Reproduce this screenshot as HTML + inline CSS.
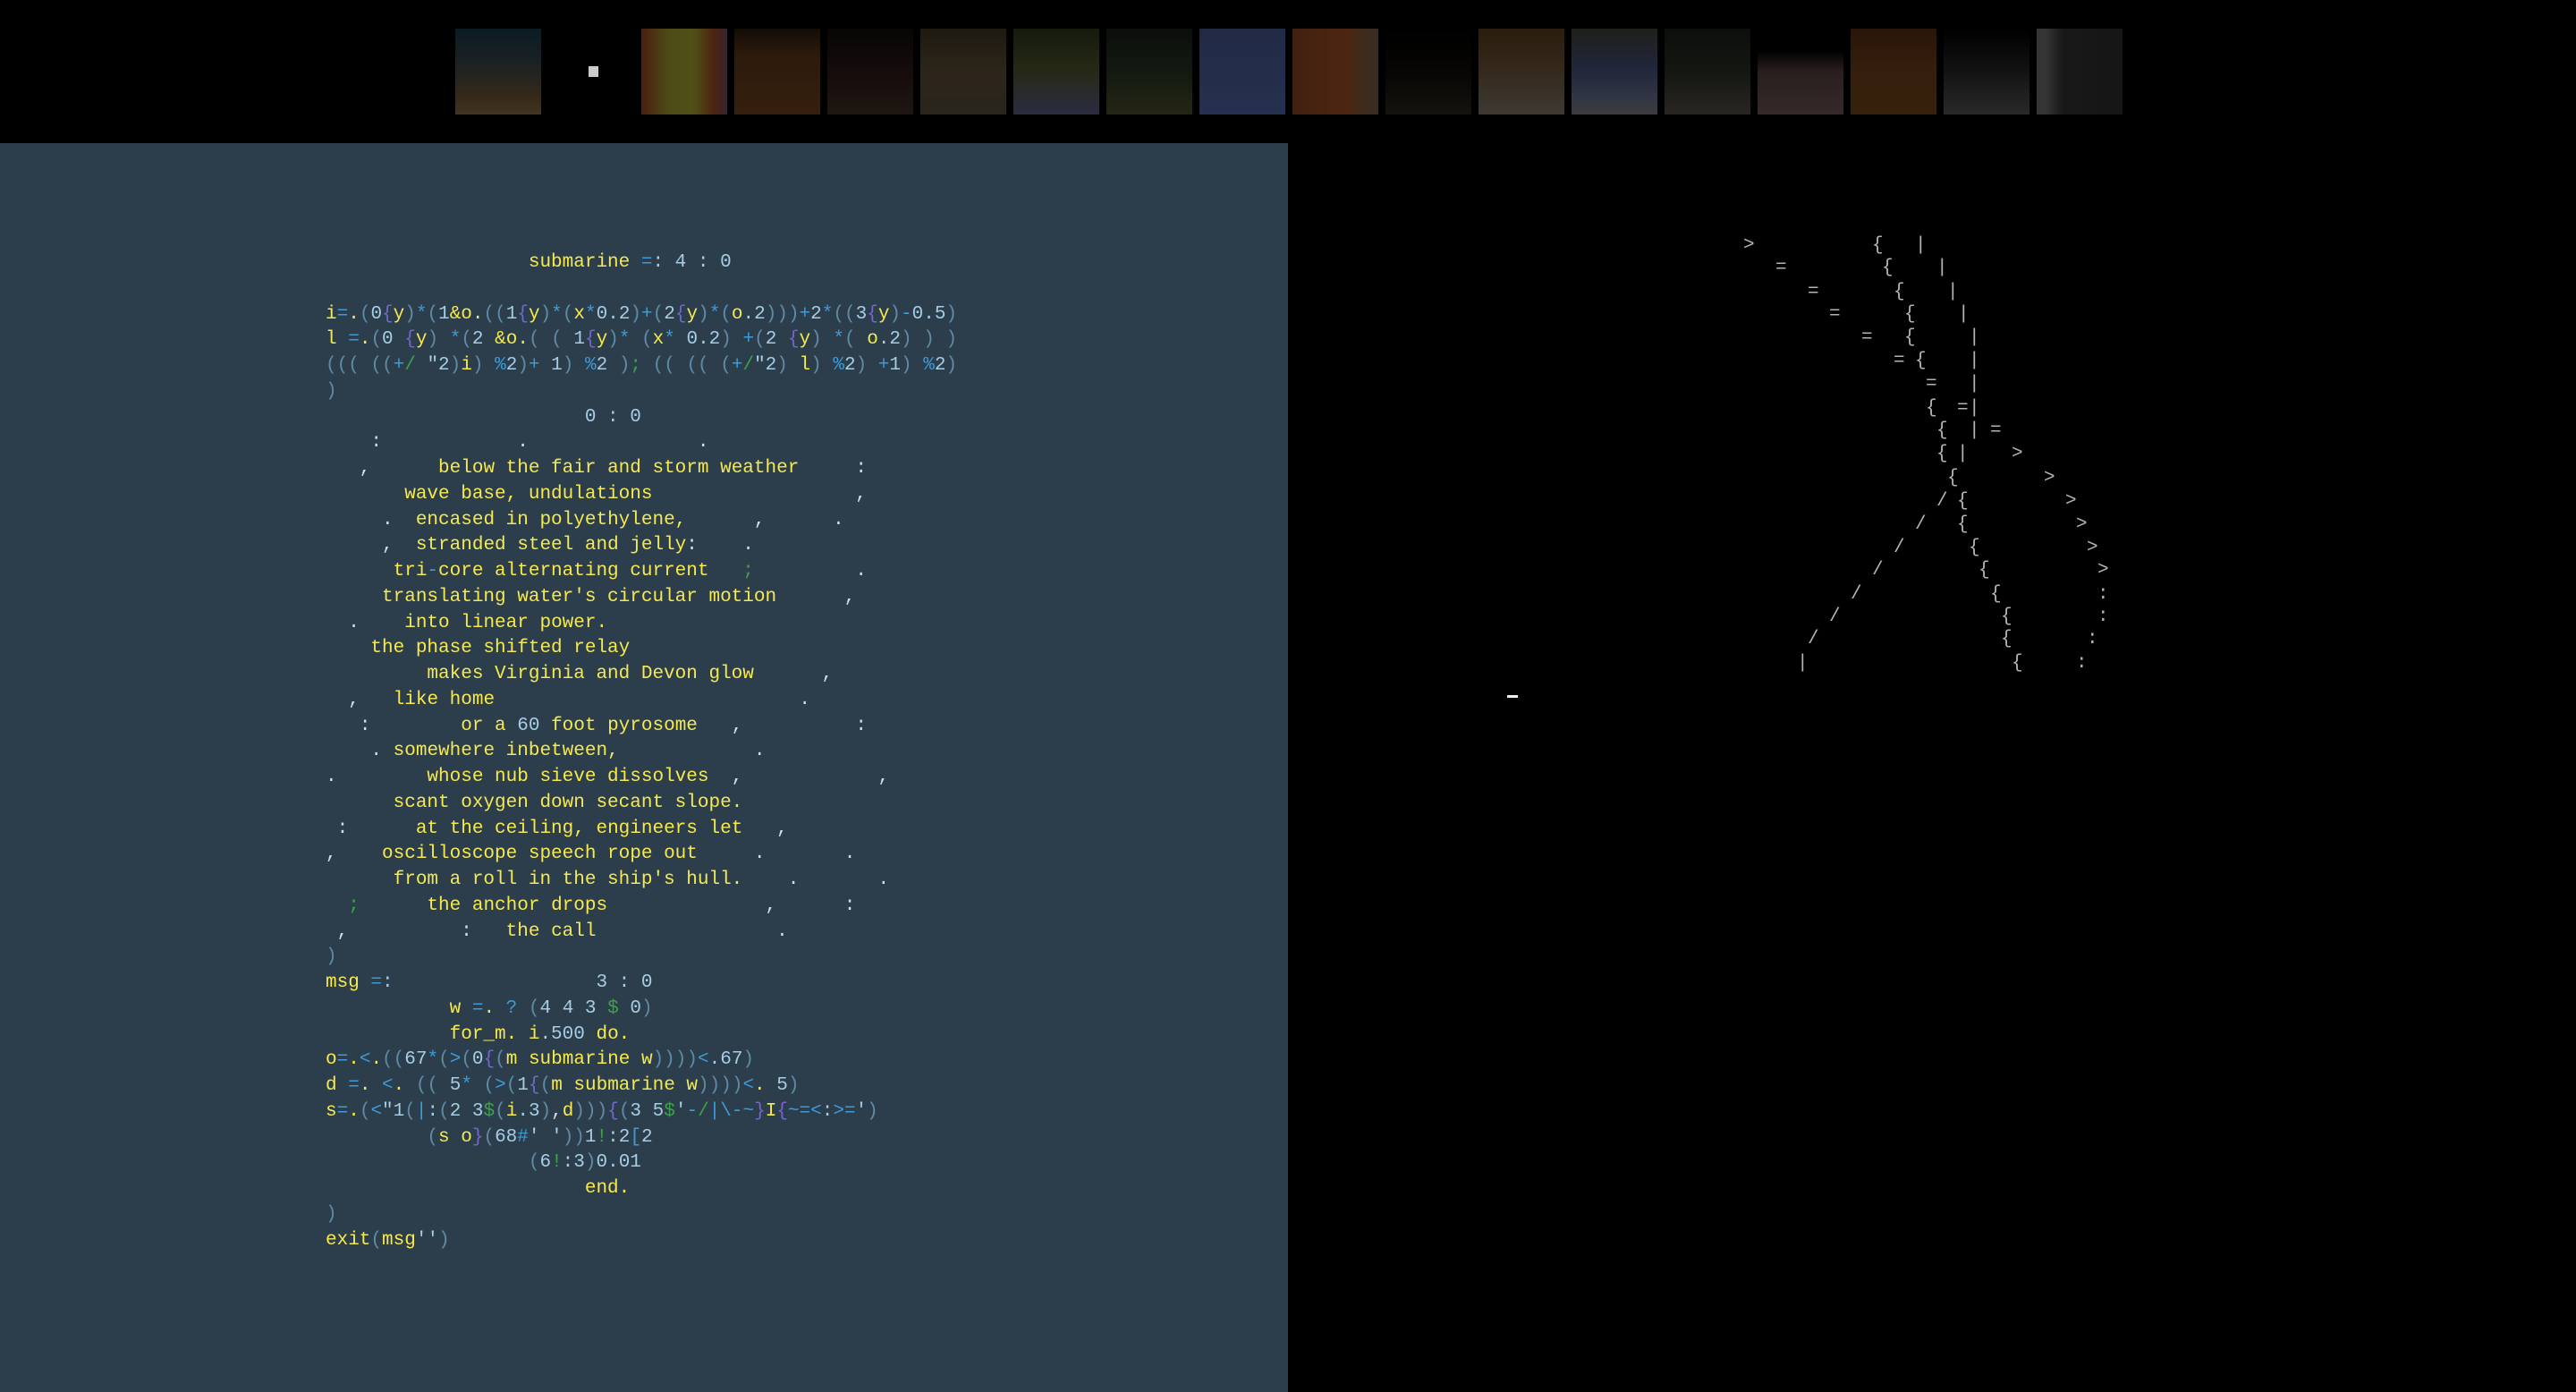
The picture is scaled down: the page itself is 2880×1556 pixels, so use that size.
<!DOCTYPE html>
<html><head><meta charset="utf-8"><style>
html,body{margin:0;padding:0;background:#000;width:2880px;height:1556px;overflow:hidden;}
#top{position:absolute;left:0;top:0;width:2880px;height:160px;background:#000;}
.th{position:absolute;top:32px;width:96px;height:96px;filter:brightness(0.72);}
#left{position:absolute;left:0;top:160px;width:1440px;height:1396px;background:#2c3e4c;}
pre{position:absolute;left:364px;top:280px;margin:0;font-family:"Liberation Mono",monospace;font-size:21px;line-height:28.75px;color:#f5e94f;}
.n{color:#a6cde4}.o{color:#3d9bd8}.p{color:#5f8aa6}.b{color:#7366cc}.g{color:#3fa04a}.w{color:#d6dde2}.y{color:#f5e94f}
.a{position:absolute;width:12px;text-align:center;font-family:"Liberation Mono",monospace;font-size:21px;line-height:26px;color:#b4b4b4;}
</style></head><body>
<div id="top">
<div class="th" style="left:509px;background:linear-gradient(#0f2630,#2a3030 45%,#4a3a22 80%,#5a4a30)"></div>
<div class="th" style="left:613px;background:#000;filter:none"><div style="position:absolute;left:45px;top:42px;width:11px;height:12px;background:#ccc"></div></div>
<div class="th" style="left:717px;background:linear-gradient(90deg,#6a2a18,#6a6620 30%,#707020 60%,#6a3018 85%,#4a3040)"></div>
<div class="th" style="left:821px;background:linear-gradient(#1a120a,#3e2410 30%,#4a2c12)"></div>
<div class="th" style="left:925px;background:linear-gradient(#0a0808,#1e1010 50%,#2a2018)"></div>
<div class="th" style="left:1029px;background:linear-gradient(#2a2418,#3e3424 50%,#3a3428)"></div>
<div class="th" style="left:1133px;background:linear-gradient(#1e2414,#34381c 45%,#3c3e5a)"></div>
<div class="th" style="left:1237px;background:linear-gradient(#101410,#1a2418 50%,#34341c)"></div>
<div class="th" style="left:1341px;background:linear-gradient(#2e3a60,#34446e)"></div>
<div class="th" style="left:1445px;background:linear-gradient(90deg,#5a2c14,#6a3418 60%,#4a4030)"></div>
<div class="th" style="left:1549px;background:linear-gradient(#000,#0a0806 50%,#1e1a14)"></div>
<div class="th" style="left:1653px;background:linear-gradient(#3a2814,#4a3a28 50%,#565048)"></div>
<div class="th" style="left:1757px;background:linear-gradient(#2a2c26,#2e3450 45%,#444a60 80%,#555)"></div>
<div class="th" style="left:1861px;background:linear-gradient(#101410,#1c2018 50%,#3a3430)"></div>
<div class="th" style="left:1965px;background:linear-gradient(#000 25%,#3a2a2a 50%,#4a3a3a)"></div>
<div class="th" style="left:2069px;background:linear-gradient(#3a1e0c,#4a2a10 50%,#4a2e12)"></div>
<div class="th" style="left:2173px;background:linear-gradient(#000,#1a1a1a 50%,#3a3a3a)"></div>
<div class="th" style="left:2277px;background:linear-gradient(90deg,#4a4a4a 10%,#222 30%,#1e1e1e)"></div>
</div>
<div id="left"></div>
<pre>                  submarine <span class="o">=</span><span class="n">: 4 : 0</span>

i<span class="o">=</span>.<span class="p">(</span><span class="n">0</span><span class="b">{</span>y<span class="p">)</span><span class="o">*</span><span class="p">(</span><span class="n">1</span>&amp;o.<span class="p">((</span><span class="n">1</span><span class="b">{</span>y<span class="p">)</span><span class="o">*</span><span class="p">(</span>x<span class="o">*</span><span class="n">0.2</span><span class="p">)</span><span class="o">+</span><span class="p">(</span><span class="n">2</span><span class="b">{</span>y<span class="p">)</span><span class="o">*</span><span class="p">(</span>o<span class="n">.2</span><span class="p">)))</span><span class="o">+</span><span class="n">2</span><span class="o">*</span><span class="p">((</span><span class="n">3</span><span class="b">{</span>y<span class="p">)</span><span class="o">-</span><span class="n">0.5</span><span class="p">)</span>
l <span class="o">=</span>.<span class="p">(</span><span class="n">0</span> <span class="b">{</span>y<span class="p">)</span> <span class="o">*</span><span class="p">(</span><span class="n">2</span> &amp;o.<span class="p">( (</span> <span class="n">1</span><span class="b">{</span>y<span class="p">)</span><span class="o">*</span> <span class="p">(</span>x<span class="o">*</span> <span class="n">0.2</span><span class="p">)</span> <span class="o">+</span><span class="p">(</span><span class="n">2</span> <span class="b">{</span>y<span class="p">)</span> <span class="o">*</span><span class="p">(</span> o<span class="n">.2</span><span class="p">) ) )</span>
<span class="p">((( ((</span><span class="o">+</span><span class="g">/</span> <span class="n">"2</span><span class="p">)</span>i<span class="p">)</span> <span class="o">%</span><span class="n">2</span><span class="p">)</span><span class="o">+</span> <span class="n">1</span><span class="p">)</span> <span class="o">%</span><span class="n">2</span> <span class="p">)</span><span class="g">;</span> <span class="p">(( (( (</span><span class="o">+</span><span class="g">/</span><span class="n">"2</span><span class="p">)</span> l<span class="p">)</span> <span class="o">%</span><span class="n">2</span><span class="p">)</span> <span class="o">+</span><span class="n">1</span><span class="p">)</span> <span class="o">%</span><span class="n">2</span><span class="p">)</span>
<span class="p">)</span>
<span class="n">                       0 : 0</span>
<span class="w">    :            .               .</span>
<span class="w">   ,</span>      below the fair and storm weather     <span class="w">:</span>
       wave base, undulations                  <span class="w">,</span>
     <span class="w">.</span>  encased in polyethylene,      <span class="w">,</span>      <span class="w">.</span>
     <span class="w">,</span>  stranded steel and jelly<span class="w">:    .</span>
      tri<span class="o">-</span>core alternating current   <span class="g">;</span>         <span class="w">.</span>
     translating water's circular motion      <span class="w">,</span>
  <span class="w">.</span>    into linear power.
    the phase shifted relay
         makes Virginia and Devon glow      <span class="w">,</span>
  <span class="w">,</span>   like home                           <span class="w">.</span>
   <span class="w">:</span>        or a <span class="n">60</span> foot pyrosome   <span class="w">,</span>          <span class="w">:</span>
    <span class="w">.</span> somewhere inbetween,            <span class="w">.</span>
<span class="w">.</span>        whose nub sieve dissolves  <span class="w">,</span>            <span class="w">,</span>
      scant oxygen down secant slope.
 <span class="w">:</span>      at the ceiling, engineers let   <span class="w">,</span>
<span class="w">,</span>    oscilloscope speech rope out     <span class="w">.</span>       <span class="w">.</span>
      from a roll in the ship's hull.    <span class="w">.</span>       <span class="w">.</span>
  <span class="g">;</span>      the anchor drops              <span class="w">,</span>      <span class="w">:</span>
 <span class="w">,</span>          <span class="w">:</span>   the call                <span class="w">.</span>
<span class="p">)</span>
msg <span class="o">=</span><span class="n">:                  3 : 0</span>
           w <span class="o">=</span>. <span class="o">?</span> <span class="p">(</span><span class="n">4 4 3</span> <span class="g">$</span> <span class="n">0</span><span class="p">)</span>
           for_m. i<span class="n">.500</span> do.
o<span class="o">=</span>.<span class="o">&lt;</span>.<span class="p">((</span><span class="n">67</span><span class="o">*</span><span class="p">(</span><span class="o">&gt;</span><span class="p">(</span><span class="n">0</span><span class="b">{</span><span class="p">(</span>m submarine w<span class="p">))))</span><span class="o">&lt;</span><span class="n">.67</span><span class="p">)</span>
d <span class="o">=</span>. <span class="o">&lt;</span>. <span class="p">((</span> <span class="n">5</span><span class="o">*</span> <span class="p">(</span><span class="o">&gt;</span><span class="p">(</span><span class="n">1</span><span class="b">{</span><span class="p">(</span>m submarine w<span class="p">))))</span><span class="o">&lt;</span>. <span class="n">5</span><span class="p">)</span>
s<span class="o">=</span>.<span class="p">(</span><span class="o">&lt;</span><span class="n">"1</span><span class="p">(</span><span class="o">|</span><span class="n">:</span><span class="p">(</span><span class="n">2 3</span><span class="g">$</span><span class="p">(</span>i<span class="n">.3</span><span class="p">)</span><span class="w">,</span>d<span class="p">)))</span><span class="b">{</span><span class="p">(</span><span class="n">3 5</span><span class="g">$</span><span class="n">'</span><span class="o">-</span><span class="g">/</span><span class="o">|\-~</span><span class="b">}</span>I<span class="b">{</span><span class="o">~=&lt;</span><span class="n">:</span><span class="o">&gt;=</span><span class="n">'</span><span class="p">)</span>
         <span class="p">(</span>s o<span class="b">}</span><span class="p">(</span><span class="n">68</span><span class="o">#</span><span class="n">' '</span><span class="p">))</span><span class="n">1</span><span class="g">!</span><span class="n">:2</span><span class="o">[</span><span class="n">2</span>
                  <span class="p">(</span><span class="n">6</span><span class="g">!</span><span class="n">:3</span><span class="p">)</span><span class="n">0.01</span>
                       end.
<span class="p">)</span>
exit<span class="p">(</span>msg<span class="n">''</span><span class="p">)</span></pre>
<div id="art">
<div class="a" style="left:1949px;top:262px">&gt;</div><div class="a" style="left:2093px;top:262px">{</div><div class="a" style="left:2141px;top:262px">|</div>
<div class="a" style="left:1985px;top:287px">=</div><div class="a" style="left:2104px;top:287px">{</div><div class="a" style="left:2165px;top:287px">|</div>
<div class="a" style="left:2021px;top:314px">=</div><div class="a" style="left:2117px;top:314px">{</div><div class="a" style="left:2177px;top:314px">|</div>
<div class="a" style="left:2045px;top:339px">=</div><div class="a" style="left:2129px;top:339px">{</div><div class="a" style="left:2189px;top:339px">|</div>
<div class="a" style="left:2081px;top:365px">=</div><div class="a" style="left:2129px;top:365px">{</div><div class="a" style="left:2201px;top:365px">|</div>
<div class="a" style="left:2117px;top:391px">=</div><div class="a" style="left:2141px;top:391px">{</div><div class="a" style="left:2201px;top:391px">|</div>
<div class="a" style="left:2153px;top:417px">=</div><div class="a" style="left:2201px;top:417px">|</div>
<div class="a" style="left:2153px;top:444px">{</div><div class="a" style="left:2188px;top:444px">=</div><div class="a" style="left:2201px;top:444px">|</div>
<div class="a" style="left:2165px;top:469px">{</div><div class="a" style="left:2201px;top:469px">|</div><div class="a" style="left:2225px;top:469px">=</div>
<div class="a" style="left:2165px;top:495px">{</div><div class="a" style="left:2188px;top:495px">|</div><div class="a" style="left:2249px;top:495px">&gt;</div>
<div class="a" style="left:2177px;top:522px">{</div><div class="a" style="left:2285px;top:522px">&gt;</div>
<div class="a" style="left:2165px;top:548px">/</div><div class="a" style="left:2188px;top:548px">{</div><div class="a" style="left:2309px;top:548px">&gt;</div>
<div class="a" style="left:2141px;top:574px">/</div><div class="a" style="left:2188px;top:574px">{</div><div class="a" style="left:2321px;top:574px">&gt;</div>
<div class="a" style="left:2117px;top:600px">/</div><div class="a" style="left:2201px;top:600px">{</div><div class="a" style="left:2333px;top:600px">&gt;</div>
<div class="a" style="left:2093px;top:625px">/</div><div class="a" style="left:2212px;top:625px">{</div><div class="a" style="left:2345px;top:625px">&gt;</div>
<div class="a" style="left:2069px;top:652px">/</div><div class="a" style="left:2225px;top:652px">{</div><div class="a" style="left:2345px;top:652px">:</div>
<div class="a" style="left:2045px;top:677px">/</div><div class="a" style="left:2237px;top:677px">{</div><div class="a" style="left:2345px;top:677px">:</div>
<div class="a" style="left:2021px;top:702px">/</div><div class="a" style="left:2237px;top:702px">{</div><div class="a" style="left:2333px;top:702px">:</div>
<div class="a" style="left:2009px;top:729px">|</div><div class="a" style="left:2249px;top:729px">{</div><div class="a" style="left:2321px;top:729px">:</div>
</div>
<div style="position:absolute;left:1685px;top:777px;width:12px;height:3px;background:#eee"></div>
</body></html>
